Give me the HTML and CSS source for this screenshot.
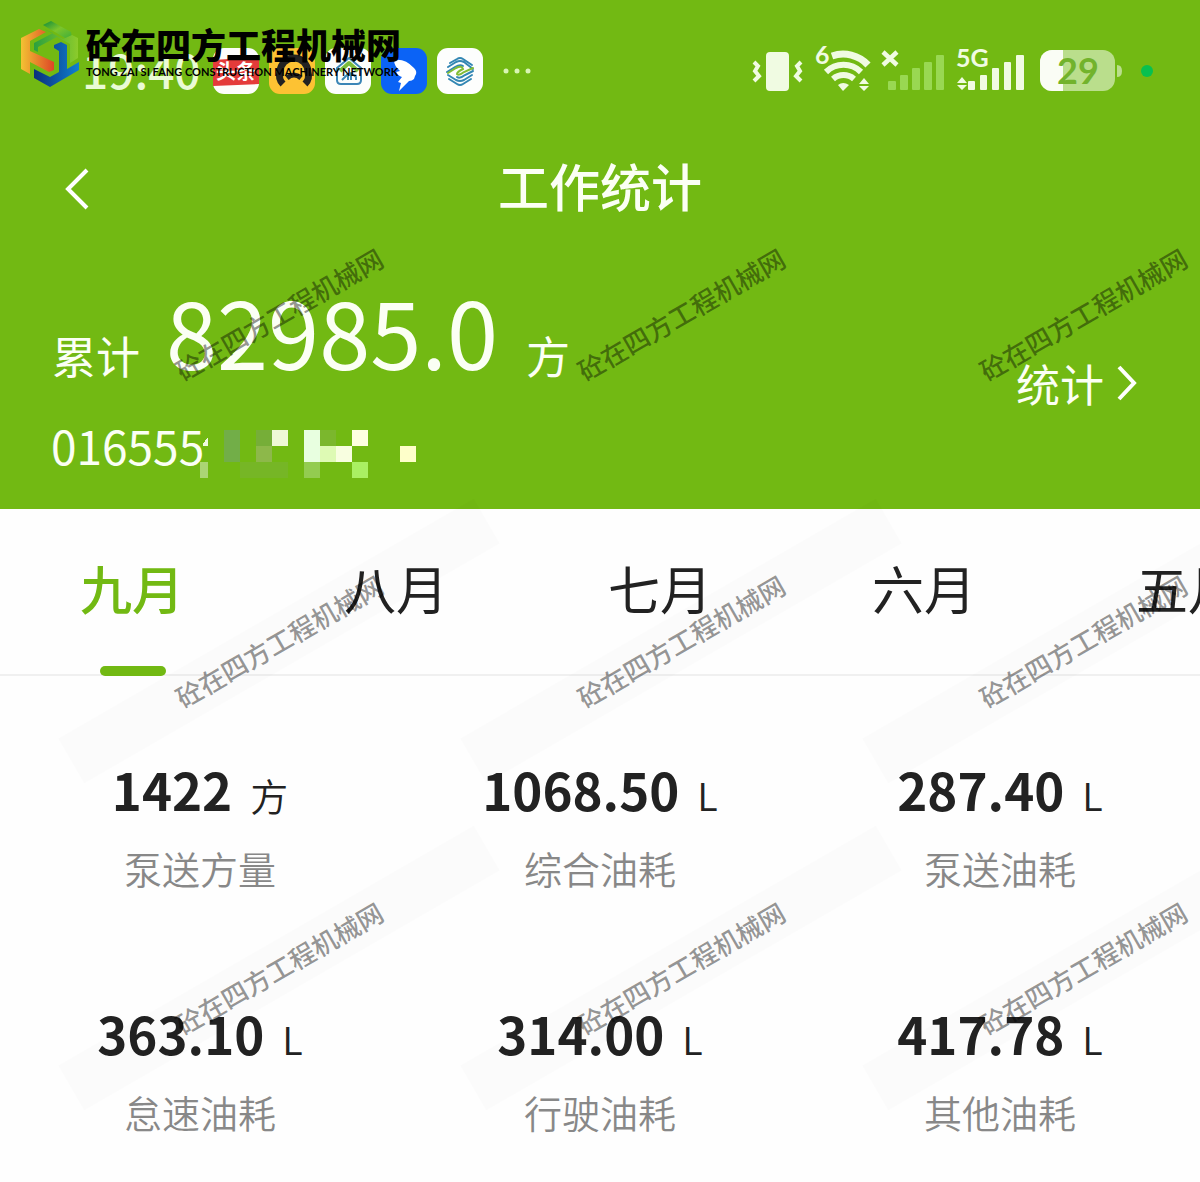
FILE: index.html
```html
<!DOCTYPE html>
<html lang="zh-CN">
<head>
<meta charset="utf-8">
<meta name="viewport" content="width=device-width, initial-scale=1">
<title>工作统计</title>
<link rel="stylesheet" href="styles.css">
</head>
<body>
<div class="page">
  <header class="hero">
    <div class="status">
      <div class="status-left">
        <time class="clock">19:40</time>
        <svg class="app" viewBox="0 0 46 46"><rect width="46" height="46" rx="11" fill="#fdfdfb"/><path d="M0 12L46 9V36L0 38Z" fill="#e43b3a"/><text x="23" y="31" text-anchor="middle" class="app-label">头条</text></svg>
        <svg class="app" viewBox="0 0 46 46"><rect width="46" height="46" rx="11" fill="#fdc233"/><path d="M14 36Q9 31 11 24A14 14 0 0 1 39 24Q41 31 36 36" fill="none" stroke="#222" stroke-width="7"/><path d="M18 30Q25 24 32 30" fill="none" stroke="#222" stroke-width="5"/></svg>
        <svg class="app" viewBox="0 0 46 46"><rect width="46" height="46" rx="11" fill="#fcfefc"/><g fill="none" stroke-width="2" stroke-linejoin="round"><path d="M12 20L24 10L36 20V32Q36 36 32 36H16Q12 36 12 32Z" stroke="#3b86b6"/><path d="M15 23L24 15L33 23" stroke="#7cbc3a" stroke-width="4"/><path d="M17 32L23 26V32M26 32V25L31 29V32" stroke="#3b86b6"/></g></svg>
        <svg class="app" viewBox="0 0 46 46"><rect width="46" height="46" rx="11" fill="#0b63f6"/><path d="M13 12Q24 10 33 20Q37 24 34 28L33 31Q31 33 28 33L18 43L20 35L17 34L21 29Q17 28 15 24L19 23Q13 18 13 12Z" fill="#fff"/></svg>
        <svg class="app" viewBox="0 0 46 46"><rect width="46" height="46" rx="11" fill="#fdfefd"/><g fill="none" stroke-width="2" stroke-linecap="round"><path d="M13 15L20 11Q23 9 26 11L35 17M11 19L19 14Q23 12 27 14L36 21M10 24L18 19Q23 16 26 18M12 31L20 36Q23 38 26 36L34 31M11 27L19 32Q23 34 27 32L35 27M20 29Q23 31 28 27L36 23" stroke="#3387b3"/><path d="M11 25L19 20Q25 17 26 21Q20 24 20 26Q22 28 27 24L36 20" stroke="#82bd35"/></g></svg>
        <svg class="more" viewBox="0 0 28 6"><g fill="#d9f5b4"><circle cx="3" cy="3" r="2.5"/><circle cx="14" cy="3" r="2.5"/><circle cx="25" cy="3" r="2.5"/></g></svg>
      </div>
      <svg class="status-right" viewBox="0 -6 404 60">
        <g fill="#f0fbe2">
          <rect x="15" y="5" width="23" height="39" rx="4"/>
          <path d="M3 15L7 19L4 24L8 29L3 34M50 15L46 19L49 24L45 29L50 34" fill="none" stroke="#f0fbe2" stroke-width="4"/>
          <text x="64" y="17" class="sig">6</text>
          <g fill="none" stroke="#f0fbe2" stroke-width="7">
            <path d="M81 9A34 34 0 0 1 117 18"/><path d="M75 25A25 25 0 0 1 110 25" stroke-width="6"/><path d="M82 32A16 16 0 0 1 103 32" stroke-width="6"/>
          </g>
          <path d="M87 38Q92 34 98 38L92 44Z"/>
          <path d="M108 37L113 31L118 37ZM108 39L113 44L118 39Z"/>
          <path d="M132 5L146 18M146 5L132 18" stroke="#f0fbe2" stroke-width="4.5"/>
          <g fill="#99d852"><rect x="137" y="34" width="8" height="9" rx="1"/><rect x="149" y="28" width="8" height="15" rx="1"/><rect x="161" y="21" width="8" height="22" rx="1"/><rect x="173" y="15" width="8" height="28" rx="1"/><rect x="185" y="8" width="8" height="35" rx="1"/></g>
          <text x="205" y="20" class="sig">5G</text>
          <path d="M206 36L211 30L216 36ZM206 38L211 43L216 38Z"/>
          <rect x="217" y="34" width="7" height="9" rx="1"/><rect x="229" y="28" width="7" height="15" rx="1"/><rect x="241" y="21" width="7" height="22" rx="1"/><rect x="253" y="15" width="7" height="28" rx="1"/><rect x="265" y="8" width="8" height="35" rx="1"/>
        </g>
        <rect x="289" y="3" width="75" height="41" rx="12" fill="#bade8c"/>
        <path d="M312 3H301A12 12 0 0 0 289 15V32A12 12 0 0 0 301 44H312Z" fill="#fafdf5"/>
        <path d="M366 18Q371 18 371 24Q371 30 366 30Z" fill="#bade8c"/>
        <text x="327" y="37" text-anchor="middle" class="battery">29</text>
        <circle cx="396" cy="24" r="6" fill="#08c04f"/>
      </svg>
    </div>

    <div class="titlebar">
      <button class="back" type="button" aria-label="返回"><svg viewBox="0 0 24 42"><path d="M22 2L3 21L22 40" fill="none" stroke="#fff" stroke-width="4"/></svg></button>
      <h1 class="title">工作统计</h1>
    </div>

    <div class="summary">
      <p class="total"><span>累计</span><strong class="total-value">82985.0</strong><span>方</span></p>
      <a class="more-link" href="#">统计<svg viewBox="0 0 22 36"><path d="M3 2L18 18L3 34" fill="none" stroke="#fff" stroke-width="4"/></svg></a>
    </div>
    <div class="serial">
      <span>016555</span>
      <svg class="mosaic" viewBox="0 0 232 48" shape-rendering="crispEdges">
        <path d="M3 14L8 7V16H3Z" fill="#f0fbe2"/>
        <rect x="0" y="32" width="8" height="16" fill="#abd574"/>
        <rect x="24" y="0" width="16" height="32" fill="#72ae48"/>
        <rect x="40" y="32" width="48" height="16" fill="#76b626"/>
        <rect x="56" y="0" width="16" height="16" fill="#76ae38"/><rect x="56" y="16" width="16" height="16" fill="#8db84a"/>
        <rect x="72" y="0" width="16" height="16" fill="#eff8d6"/>
        <rect x="104" y="0" width="16" height="32" fill="#e8ffe0"/><rect x="104" y="32" width="16" height="16" fill="#93cc50"/>
        <rect x="120" y="0" width="16" height="16" fill="#7bb72d"/><rect x="120" y="16" width="16" height="16" fill="#defab4"/>
        <rect x="136" y="16" width="16" height="16" fill="#f8fee0"/>
        <rect x="152" y="0" width="16" height="16" fill="#fdffe0"/><rect x="152" y="32" width="16" height="16" fill="#aaf063"/>
        <rect x="200" y="16" width="16" height="16" fill="#feffca"/>
      </svg>
    </div>
  </header>

  <nav class="tabs">
    <button class="tab active" type="button">九月</button>
    <button class="tab" type="button">八月</button>
    <button class="tab" type="button">七月</button>
    <button class="tab" type="button">六月</button>
    <button class="tab" type="button">五月</button>
  </nav>

  <main class="stats">
    <section class="stat"><p class="value"><b>1422</b><span>方</span></p><p class="label">泵送方量</p></section>
    <section class="stat"><p class="value"><b>1068.50</b><span>L</span></p><p class="label">综合油耗</p></section>
    <section class="stat"><p class="value"><b>287.40</b><span>L</span></p><p class="label">泵送油耗</p></section>
    <section class="stat"><p class="value"><b>363.10</b><span>L</span></p><p class="label">怠速油耗</p></section>
    <section class="stat"><p class="value"><b>314.00</b><span>L</span></p><p class="label">行驶油耗</p></section>
    <section class="stat"><p class="value"><b>417.78</b><span>L</span></p><p class="label">其他油耗</p></section>
  </main>

  <div class="watermarks">
    <span class="plain">砼在四方工程机械网</span><span class="plain">砼在四方工程机械网</span><span class="plain">砼在四方工程机械网</span>
    <span>砼在四方工程机械网</span><span>砼在四方工程机械网</span><span>砼在四方工程机械网</span>
    <span>砼在四方工程机械网</span><span>砼在四方工程机械网</span><span>砼在四方工程机械网</span>
  </div>

  <div class="brand">
    <svg class="brand-mark" viewBox="0 0 58 66">
      <defs>
        <linearGradient id="orange" x1="0" x2="1"><stop offset="0" stop-color="#f3c233"/><stop offset="1" stop-color="#dd4526"/></linearGradient>
        <linearGradient id="green" x1="0" x2="1" y1="0" y2="1"><stop offset="0" stop-color="#0d8a3c"/><stop offset=".5" stop-color="#7cc52b"/><stop offset="1" stop-color="#3fae3a"/></linearGradient>
        <linearGradient id="lime" x1="0" x2="1"><stop offset="0" stop-color="#2aa03f"/><stop offset="1" stop-color="#8ccb2b"/></linearGradient>
        <linearGradient id="blue" x1="0" x2="1"><stop offset="0" stop-color="#0b2f7c"/><stop offset="1" stop-color="#0f80cf"/></linearGradient>
      </defs>
      <path d="M0 17L18 8L25 11L9 20V30L20 35L33 41V49L28 51L9 41V53L0 48Z" fill="url(#orange)"/>
      <path d="M22 4L30 0L50 11L51 17L44 17Z" fill="url(#green)"/>
      <path d="M23 8L42 18L51 14L57 17V37L49 42V23L36 16L17 26V31L13 29V22L32 12Z" fill="url(#lime)"/>
      <path d="M13 48L29 56L38 51V30L33 27V24L40 21L46 24V48L58 41V49L29 66L13 57Z" fill="url(#blue)"/>
    </svg>
    <div class="brand-text"><span class="brand-cn">砼在四方工程机械网</span><span class="brand-en">TONG ZAI SI FANG CONSTRUCTION MACHINERY NETWORK</span></div>
  </div>
</div>
</body>
</html>
```
FILE: styles.css
```css
* { box-sizing: border-box; }
body, p, h1 { margin: 0; }
body {
  background: #fefefe;
  color: #222;
  font-family: "Noto Sans CJK SC", sans-serif;
}
button { border: 0; padding: 0; background: none; font: inherit; color: inherit; }
svg { display: block; flex: none; }

.page { position: relative; min-height: 100vh; overflow: hidden; }

.hero { background: #72b913; color: #fbfff4; padding-bottom: 14px; }
.status {
  display: flex;
  justify-content: space-between;
  align-items: center;
  padding: 46px 45px 0 82px;
  height: 96px;
}
.status-left { display: flex; align-items: center; gap: 10px; }
.clock { width: 121px; padding-bottom: 4px; font-size: 46px; line-height: 46px; font-weight: 500; color: #eafbd5; }
.app { width: 46px; height: 46px; }
.app-label { font-size: 20px; font-weight: 700; fill: #fff; }
.more { width: 28px; height: 6px; margin-left: 10px; }
.status-right { width: 404px; height: 60px; }
.sig { font: 700 25px Lato, sans-serif; }
.battery { font: 700 36px Lato, sans-serif; fill: #72b32c; }

.titlebar {
  display: grid;
  grid-template-columns: 89px 1fr 89px;
  align-items: start;
  padding-top: 53px;
}
.back { display: flex; align-items: center; justify-self: end; height: 80px; }
.back svg { width: 24px; height: 42px; }
.title { font-size: 51px; line-height: 72px; font-weight: 500; text-align: center; }

.summary {
  display: flex;
  justify-content: space-between;
  align-items: flex-end;
  padding: 46px 62px 0 52px;
}
.total { display: flex; align-items: flex-end; padding-bottom: 28px; font-size: 44px; line-height: 60px; }
.total-value { margin: 0 28px 0 26px; font-size: 92px; line-height: 110px; font-weight: 400; }
.more-link {
  display: flex;
  align-items: center;
  gap: 12px;
  color: inherit;
  font-size: 44px;
  line-height: 60px;
  text-decoration: none;
}
.more-link svg { width: 22px; height: 36px; }
.serial { display: flex; align-items: center; height: 82px; padding-left: 51px; font-size: 46px; }
.serial span { align-self: flex-start; width: 149px; line-height: 64px; }
.mosaic { width: 232px; height: 48px; }

.tabs { display: flex; height: 167px; overflow: hidden; box-shadow: inset 0 -2px #f0f0f0; }
.tab {
  position: relative;
  flex: 0 0 264px;
  padding-bottom: 10px;
  font-size: 52px;
}
.tab.active { color: #72b913; font-weight: 500; }
.tab.active::after {
  content: "";
  position: absolute;
  left: 100px;
  bottom: 0;
  width: 66px;
  height: 10px;
  border-radius: 5px;
  background: #72b913;
}

.stats {
  display: grid;
  grid-template-columns: repeat(3, 1fr);
  row-gap: 110px;
  padding: 83px 0 40px;
  text-align: center;
}
.value { display: flex; justify-content: center; align-items: baseline; gap: 18px; line-height: 60px; }
.value b { font-size: 51px; font-weight: 700; }
.value span { font-size: 38px; font-weight: 350; }
.label { margin-top: 18px; font-size: 38px; line-height: 50px; font-weight: 350; color: #888; }

.watermarks {
  position: absolute;
  top: 150px;
  left: 78px;
  display: grid;
  grid-template-columns: repeat(3, 402px);
  grid-auto-rows: 327px;
  place-items: center;
  pointer-events: none;
}
.watermarks span {
  width: 480px;
  margin: 0 -39px;
  background: rgba(0, 0, 0, 0.012);
  color: rgba(0, 0, 0, 0.42);
  font-size: 26px;
  line-height: 52px;
  font-weight: 500;
  text-align: center;
  transform: rotate(-30deg);
}
.watermarks .plain { background: none; }

.brand { position: absolute; top: 21px; left: 21px; display: flex; gap: 7px; color: #000; }
.brand-mark { width: 58px; height: 66px; }
.brand-text { display: flex; flex-direction: column; padding-top: 3px; white-space: nowrap; }
.brand-cn { font-size: 35px; line-height: 40px; font-weight: 900; }
.brand-en { font: 700 11px/16px Lato, sans-serif; }
```
